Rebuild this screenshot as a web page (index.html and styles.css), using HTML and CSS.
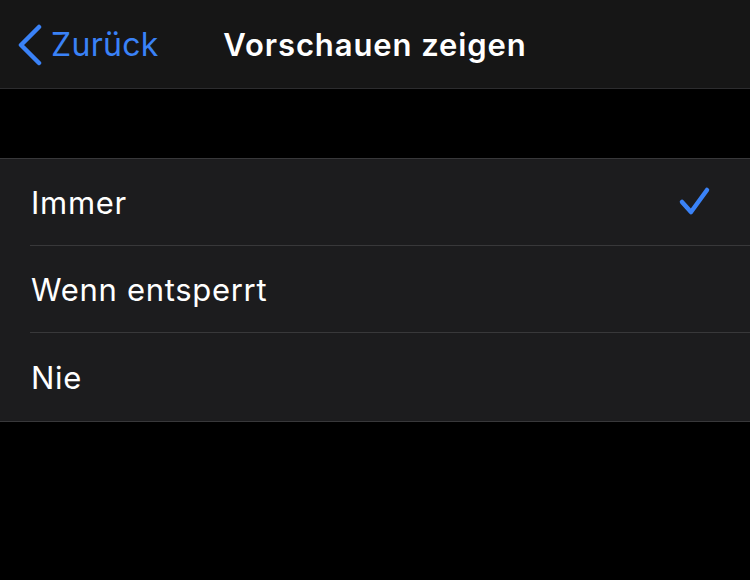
FILE: index.html
```html
<!DOCTYPE html>
<html lang="de">
<head>
    <meta charset="UTF-8">
    <meta name="viewport" content="width=device-width, initial-scale=1.0">
    <title>Vorschauen zeigen</title>
    <link rel="stylesheet" href="styles.css">
</head>
<body>
    <div class="navbar">
        <a class="back" href="#">
            <svg class="chevron" width="26" height="42" viewBox="0 0 26 42">
                <path d="M22 3 L4 21 L22 39" fill="none" stroke="#3a82f7" stroke-width="4.5" stroke-linecap="round" stroke-linejoin="round"/>
            </svg>
            <span>Zurück</span>
        </a>
        <h1 class="title">Vorschauen zeigen</h1>
    </div>

    <div class="spacer"></div>

    <ul class="list">
        <li class="row">
            <span>Immer</span>
            <svg class="check" width="34" height="32" viewBox="0 0 34 32">
                <path d="M4 16 L13 26 L29 4" fill="none" stroke="#3a82f7" stroke-width="4.5" stroke-linecap="round" stroke-linejoin="round"/>
            </svg>
        </li>
        <li class="row"><span>Wenn entsperrt</span></li>
        <li class="row"><span>Nie</span></li>
    </ul>
</body>
</html>
```

FILE: styles.css
```css
body {
    margin: 0;
    background-color: #000;
    font-family: Inter, "Noto Sans", sans-serif;
    color: #fff;
    height: 580px;
    overflow: hidden;
}
.navbar {
    position: relative;
    height: 88px;
    background-color: #161616;
    border-bottom: 1px solid #2c2c2e;
    display: flex;
    align-items: center;
}
.back {
    display: flex;
    align-items: center;
    gap: 8px;
    padding-left: 17px;
    color: #3a82f7;
    text-decoration: none;
    font-size: 32px;
    letter-spacing: 0.3px;
}
.chevron {
    display: block;
    margin-top: 1px;
}
.title {
    position: absolute;
    left: 0;
    right: 0;
    top: 0;
    height: 88px;
    margin: 0;
    display: flex;
    align-items: center;
    justify-content: center;
    font-size: 31px;
    font-weight: 600;
    letter-spacing: 0.9px;
    pointer-events: none;
}
.spacer {
    height: 69px;
}
.list {
    list-style: none;
    margin: 0;
    padding: 0 0 0 30px;
    background-color: #1c1c1e;
    border-top: 1px solid #38383a;
    border-bottom: 1px solid #38383a;
}
.row {
    box-sizing: border-box;
    height: 87px;
    display: flex;
    align-items: center;
    justify-content: space-between;
    padding-right: 38px;
    font-size: 31px;
    letter-spacing: 0.7px;
    border-bottom: 1px solid #38383a;
}
.row:last-child {
    border-bottom: none;
    height: 88px;
}
.row span {
    padding-left: 1px;
}
.check {
    display: block;
}
```
